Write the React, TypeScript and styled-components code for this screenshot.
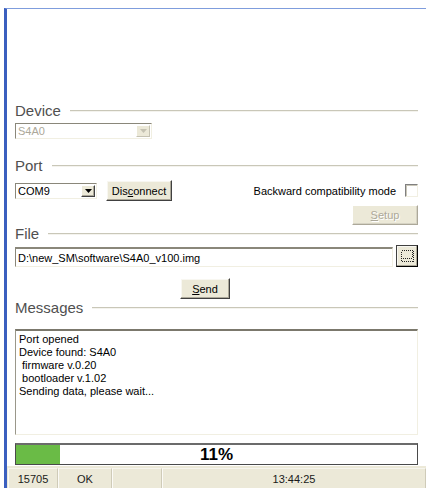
import React from 'react';
import styled, { createGlobalStyle, css } from 'styled-components';

const GlobalStyle = createGlobalStyle`
  html, body {
    margin: 0;
    padding: 0;
    background: #ffffff;
  }
  body {
    font-family: 'Liberation Sans', Arial, sans-serif;
    font-size: 11px;
    color: #000;
  }
`;

const Window = styled.div`
  margin: 8px 0 0 4px;
  height: 480px;
  box-sizing: border-box;
  border-top: 1px solid #7f9ddd;
  border-left: 3px solid #3b5fbf;
  display: flex;
  flex-direction: column;
  background: #fff;
`;

const Form = styled.div`
  flex: 1;
  display: flex;
  flex-direction: column;
  padding: 93px 8px 0 8px;
`;

const GroupHeader = styled.div<{ $top?: number }>`
  display: flex;
  align-items: center;
  gap: 9px;
  height: 18px;
  margin-top: ${({ $top }) => $top ?? 0}px;
`;

const GroupTitle = styled.span`
  font-size: 15px;
  line-height: 18px;
  color: #505050;
`;

const GroupRule = styled.div`
  flex: 1;
  height: 0;
  border-top: 1px solid #c9c7b8;
  border-bottom: 1px solid #f4f3ee;
`;

const sunken = css`
  box-sizing: border-box;
  border-style: solid;
  border-width: 1px;
  border-color: #8a877a #f1efe2 #f1efe2 #8a877a;
  background: #fff;
`;

const raised = css`
  box-sizing: border-box;
  border: 1px solid;
  border-color: #ffffff #404040 #404040 #ffffff;
  box-shadow: inset -1px -1px #aca899, inset 1px 1px #f8f7f1;
  background: #ece9d8;
`;

const Combo = styled.div<{ $width: number; $disabled?: boolean }>`
  ${sunken};
  width: ${({ $width }) => $width}px;
  height: 16px;
  display: flex;
  align-items: center;
  padding: 0 1px 0 2px;
  color: ${({ $disabled }) => ($disabled ? '#aca899' : '#000')};
  font-size: 11px;
`;

const ComboText = styled.span`
  flex: 1;
  line-height: 12px;
`;

const ComboArrow = styled.div<{ $disabled?: boolean }>`
  ${raised};
  width: 14px;
  height: 12px;
  display: flex;
  align-items: center;
  justify-content: center;
  border-color: ${({ $disabled }) =>
    $disabled ? '#fff #c5c2b2 #c5c2b2 #fff' : '#fff #404040 #404040 #fff'};
  box-shadow: ${({ $disabled }) => ($disabled ? 'none' : 'inset -1px -1px #aca899')};
`;

const Button = styled.button<{ $width: number; $height: number; $disabled?: boolean }>`
  ${raised};
  width: ${({ $width }) => $width}px;
  height: ${({ $height }) => $height}px;
  padding: 0;
  font-family: inherit;
  font-size: 11px;
  color: ${({ $disabled }) => ($disabled ? '#aca899' : '#000')};
  text-shadow: ${({ $disabled }) => ($disabled ? '1px 1px #fff' : 'none')};
  border-color: ${({ $disabled }) =>
    $disabled ? '#fff #aca899 #aca899 #fff' : '#fff #404040 #404040 #fff'};
  box-shadow: ${({ $disabled }) =>
    $disabled ? 'inset -1px -1px #d6d3c4' : 'inset -1px -1px #aca899, inset 1px 1px #f8f7f1'};
  cursor: default;
`;

const PortRow = styled.div`
  display: flex;
  align-items: center;
  height: 21px;
  margin-top: 5px;
  gap: 9px;
`;

const CheckLabel = styled.label`
  margin-left: auto;
  display: flex;
  align-items: center;
  gap: 9px;
  font-size: 11px;
  color: #000;
`;

const CheckBox = styled.span`
  width: 13px;
  height: 13px;
  box-sizing: border-box;
  border: 1px solid;
  border-color: #808080 #f1efe2 #f1efe2 #808080;
  box-shadow: inset 1px 1px #c9c6b8;
  background: #fff;
`;

const RightRow = styled.div<{ $top: number }>`
  display: flex;
  justify-content: flex-end;
  margin-top: ${({ $top }) => $top}px;
`;

const FileRow = styled.div`
  display: flex;
  align-items: flex-end;
  justify-content: space-between;
  height: 22px;
  margin-top: 2px;
`;

const PathField = styled.div`
  ${sunken};
  width: 378px;
  height: 20px;
  border-top: 2px solid #8a877a;
  padding: 0 2px;
  display: flex;
  align-items: center;
  font-size: 11px;
`;

const BrowseButton = styled(Button)`
  border-color: #404040 #000 #000 #404040;
  display: flex;
  align-items: center;
  justify-content: center;
`;

const SendRow = styled.div`
  margin-top: 11px;
  padding-left: 165px;
`;

const Log = styled.div`
  ${sunken};
  margin-top: 12px;
  height: 106px;
  border-top: 2px solid #7b786c;
  border-left-color: #9a978a;
  padding: 2px 3px;
  font-size: 11px;
  line-height: 13px;
  white-space: pre;
`;

const Progress = styled.div`
  margin-top: 8px;
  height: 22px;
  box-sizing: border-box;
  border: 1px solid #4a4a4a;
  border-top-width: 2px;
  border-top-color: #6b6b6b;
  position: relative;
  background: #fff;
  display: flex;
  align-items: center;
  justify-content: center;
`;

const ProgressFill = styled.div`
  position: absolute;
  left: 0;
  top: 0;
  bottom: 0;
  background: #6abb46;
`;

const ProgressText = styled.span`
  position: relative;
  font-size: 17px;
  font-weight: bold;
  color: #000;
`;

const StatusBar = styled.div`
  margin-top: 1px;
  height: 22px;
  background: #ece9d8;
  display: flex;
  padding: 2px 0 0 1px;
  box-sizing: border-box;
`;

const StatusPanel = styled.div<{ $width?: number }>`
  ${({ $width }) => ($width ? `width: ${$width}px;` : 'flex: 1;')}
  box-sizing: border-box;
  border-left: 1px solid #fbfaf6;
  border-right: 1px solid #cfcbb8;
  border-top: 1px solid #f6f5ee;
  display: flex;
  align-items: center;
  justify-content: center;
  font-size: 11px;
  color: #1a1a1a;
`;

const Arrow = ({ color }: { color: string }) => (
  <svg width="7" height="4" viewBox="0 0 7 4">
    <path d="M0 0h7L3.5 4z" fill={color} />
  </svg>
);

// dotted "browse" frame drawn on the small button beside the path field
const DottedFrame = () => (
  <svg width="13" height="12" viewBox="0 0 13 12" shapeRendering="crispEdges">
    <rect x="0.5" y="0.5" width="12" height="11" fill="none" stroke="#222" strokeDasharray="1 1" />
    <path d="M2 8.5h9" stroke="#222" strokeDasharray="1 1" />
    <path d="M11.5 2v5" stroke="#222" strokeDasharray="1 1" />
  </svg>
);

const messages = [
  'Port opened',
  'Device found: S4A0',
  ' firmware v.0.20',
  ' bootloader v.1.02',
  'Sending data, please wait...',
];

export default function App() {
  const percent = 11;
  return (
    <>
      <GlobalStyle />
      <Window>
        <Form>
          <GroupHeader>
            <GroupTitle>Device</GroupTitle>
            <GroupRule />
          </GroupHeader>
          <div style={{ marginTop: 3 }}>
            <Combo $width={137} $disabled>
              <ComboText>S4A0</ComboText>
              <ComboArrow $disabled>
                <Arrow color="#c5c2b2" />
              </ComboArrow>
            </Combo>
          </div>

          <GroupHeader $top={18}>
            <GroupTitle>Port</GroupTitle>
            <GroupRule />
          </GroupHeader>
          <PortRow>
            <Combo $width={82}>
              <ComboText>COM9</ComboText>
              <ComboArrow>
                <Arrow color="#000" />
              </ComboArrow>
            </Combo>
            <Button $width={66} $height={21}>
              Dis<u>c</u>onnect
            </Button>
            <CheckLabel>
              Backward compatibility mode
              <CheckBox />
            </CheckLabel>
          </PortRow>
          <RightRow $top={4}>
            <Button $width={66} $height={20} $disabled>
              <u>S</u>etup
            </Button>
          </RightRow>

          <GroupHeader>
            <GroupTitle>File</GroupTitle>
            <GroupRule />
          </GroupHeader>
          <FileRow>
            <PathField>D:\new_SM\software\S4A0_v100.img</PathField>
            <BrowseButton $width={22} $height={22}>
              <DottedFrame />
            </BrowseButton>
          </FileRow>
          <SendRow>
            <Button $width={50} $height={21}>
              <u>S</u>end
            </Button>
          </SendRow>

          <GroupHeader>
            <GroupTitle>Messages</GroupTitle>
            <GroupRule />
          </GroupHeader>
          <Log>{messages.join('\n')}</Log>

          <Progress>
            <ProgressFill style={{ width: `${percent}%` }} />
            <ProgressText>{percent}%</ProgressText>
          </Progress>
        </Form>
        <StatusBar>
          <StatusPanel $width={50}>15705</StatusPanel>
          <StatusPanel $width={54}>OK</StatusPanel>
          <StatusPanel $width={50} />
          <StatusPanel>13:44:25</StatusPanel>
        </StatusBar>
      </Window>
    </>
  );
}
